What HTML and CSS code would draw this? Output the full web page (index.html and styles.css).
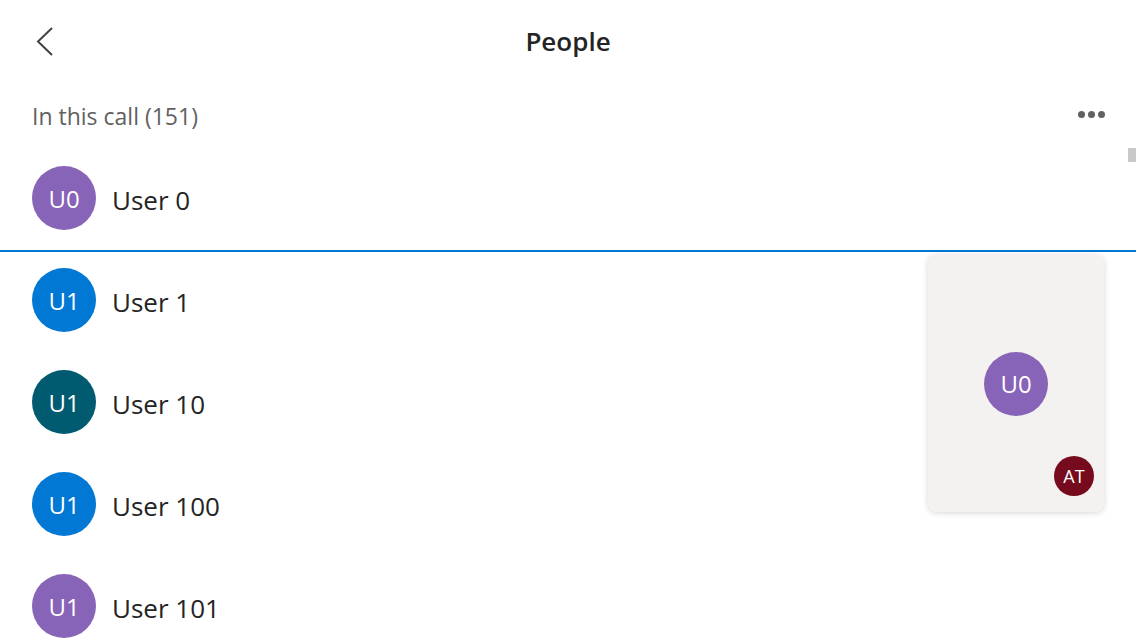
FILE: index.html
```html
<!DOCTYPE html>
<html lang="en">
<head>
<meta charset="utf-8">
<title>People</title>
<link rel="stylesheet" href="styles.css">
</head>
<body>
<div class="app">
  <header class="topbar">
    <button class="back" aria-label="Back">
      <svg width="20" height="32" viewBox="0 0 20 32"><polyline points="16,2 2,15.5 16,29" fill="none" stroke="#424242" stroke-width="2"/></svg>
    </button>
    <h1 class="title">People</h1>
  </header>
  <div class="section">
    <span class="section-label">In this call (151)</span>
    <span class="more" aria-label="More options"><i></i><i></i><i></i></span>
  </div>
  <ul class="list">
    <li class="row"><span class="avatar purple">U0</span><span class="name">User 0</span></li>
    <li class="divider"></li>
    <li class="row"><span class="avatar blue">U1</span><span class="name">User 1</span></li>
    <li class="row"><span class="avatar teal">U1</span><span class="name">User 10</span></li>
    <li class="row"><span class="avatar blue">U1</span><span class="name">User 100</span></li>
    <li class="row"><span class="avatar purple">U1</span><span class="name">User 101</span></li>
  </ul>
  <div class="thumb"></div>
  <div class="card">
    <span class="avatar purple">U0</span>
    <span class="badge">AT</span>
  </div>
</div>
</body>
</html>
```

FILE: styles.css
```css
html, body {
  margin: 0;
  padding: 0;
  height: 640px;
  overflow: hidden;
  background: #ffffff;
}
body {
  font-family: "Open Sans", "Noto Sans", sans-serif;
  color: #242424;
}
.app {
  position: relative;
  width: 1136px;
  height: 640px;
  overflow: hidden;
}
.topbar {
  height: 82px;
  display: flex;
  align-items: center;
  justify-content: center;
  position: relative;
}
.back {
  position: absolute;
  left: 36px;
  top: 26px;
  width: 20px;
  height: 32px;
  padding: 0;
  border: 0;
  background: none;
  display: flex;
}
.title {
  margin: 0;
  font-size: 26px;
  font-weight: 600;
  color: #242424;
  line-height: 1;
}
.section {
  height: 65px;
  display: flex;
  align-items: center;
  justify-content: space-between;
  padding: 0 31px 0 32px;
}
.section-label {
  font-size: 23px;
  color: #616161;
  padding-top: 2px;
}
.more {
  display: flex;
  gap: 3px;
}
.more i {
  width: 7px;
  height: 7px;
  border-radius: 50%;
  background: #616161;
}
.list {
  list-style: none;
  margin: 0;
  padding: 0;
}
.row {
  height: 102px;
  display: flex;
  align-items: center;
  padding-left: 32px;
  gap: 16px;
}
.divider {
  height: 2px;
  background: #0078d4;
  margin: 1px 0 -3px;
}
.avatar {
  width: 64px;
  height: 64px;
  border-radius: 50%;
  display: flex;
  align-items: center;
  justify-content: center;
  color: #ffffff;
  font-size: 24px;
  font-weight: 500;
  flex: none;
}
.purple { background: #8764b8; }
.blue { background: #0078d4; }
.teal { background: #005b70; }
.name {
  font-size: 26px;
  color: #242424;
  padding-top: 3px;
}
.thumb {
  position: absolute;
  right: 0;
  top: 148px;
  width: 8px;
  height: 14px;
  background: #c8c8c8;
}
.card {
  position: absolute;
  left: 928px;
  top: 255px;
  width: 176px;
  height: 257px;
  border-radius: 8px;
  background: #f3f2f1;
  box-shadow: 0 1px 6px rgba(0,0,0,0.16);
  display: flex;
  align-items: center;
  justify-content: center;
}
.badge {
  position: absolute;
  right: 10px;
  bottom: 16px;
  width: 40px;
  height: 40px;
  border-radius: 50%;
  background: #750b1c;
  color: #ffffff;
  font-size: 18px;
  font-weight: 500;
  display: flex;
  align-items: center;
  justify-content: center;
}
```
